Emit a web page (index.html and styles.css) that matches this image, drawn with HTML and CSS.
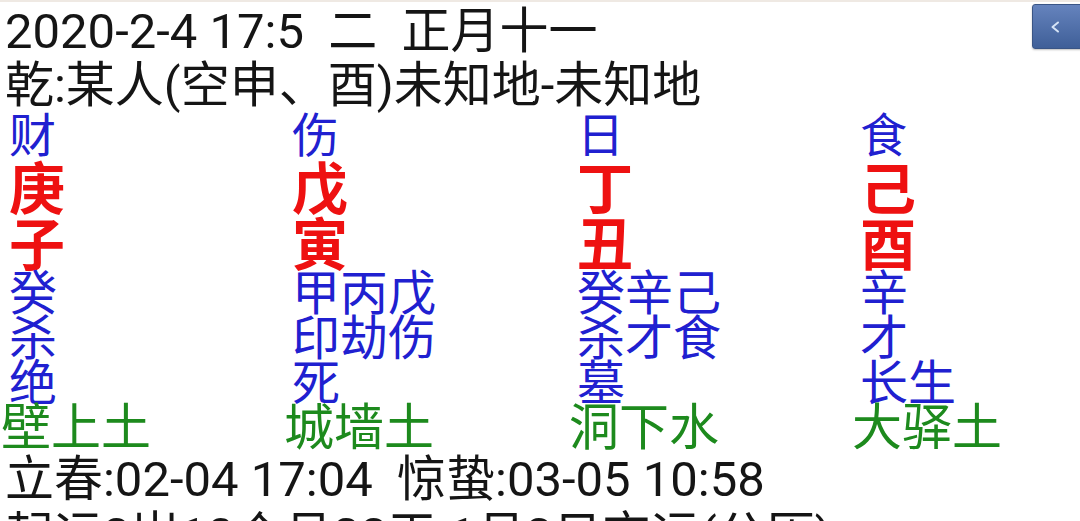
FILE: index.html
```html
<!DOCTYPE html>
<html lang="zh">
<head>
<meta charset="utf-8">
<title>八字排盘</title>
<link rel="stylesheet" href="styles.css">
</head>
<body>
<div class="screen">
  <button class="back" type="button" aria-label="返回"><svg width="10" height="12" viewBox="0 0 10 12"><path d="M8 1.5 L2.5 6 L8 10.5" fill="none" stroke="#d6e4f6" stroke-width="2" stroke-linecap="round" stroke-linejoin="round"/></svg></button>
  <div class="line l1">2020-2-4 17:5  二  正月十一</div>
  <div class="line l2">乾:某人(空申、酉)未知地-未知地</div>
  <div class="pillars">
    <div class="pillar">
      <div class="shen">财</div>
      <div class="gan">庚</div>
      <div class="zhi">子</div>
      <div class="cang">癸</div>
      <div class="cang">杀</div>
      <div class="cang">绝</div>
      <div class="nayin">壁上土</div>
    </div>
    <div class="pillar">
      <div class="shen">伤</div>
      <div class="gan">戊</div>
      <div class="zhi">寅</div>
      <div class="cang">甲丙戊</div>
      <div class="cang">印劫伤</div>
      <div class="cang">死</div>
      <div class="nayin">城墙土</div>
    </div>
    <div class="pillar">
      <div class="shen">日</div>
      <div class="gan">丁</div>
      <div class="zhi">丑</div>
      <div class="cang">癸辛己</div>
      <div class="cang">杀才食</div>
      <div class="cang">墓</div>
      <div class="nayin">洞下水</div>
    </div>
    <div class="pillar">
      <div class="shen">食</div>
      <div class="gan">己</div>
      <div class="zhi">酉</div>
      <div class="cang">辛</div>
      <div class="cang">才</div>
      <div class="cang">长生</div>
      <div class="nayin">大驿土</div>
    </div>
  </div>
  <div class="line l3">立春:02-04 17:04  惊蛰:03-05 10:58</div>
  <div class="line l4">起运3岁10个月23天 1月3日交运(公历)</div>
</div>
</body>
</html>
```

FILE: styles.css
```css
html, body {
  margin: 0;
  padding: 0;
  background: #ffffff;
}
body {
  width: 1080px;
  height: 521px;
  overflow: hidden;
  font-family: Roboto, "Noto Sans CJK SC", sans-serif;
}
.screen {
  position: relative;
  height: 521px;
  padding: 3px 0 0 5px;
  box-sizing: border-box;
  border-top: 2px solid #efe9e3;
  color: #151515;
}
.line {
  font-size: 49px;
  line-height: 54px;
  white-space: pre;
}
.pillars {
  display: grid;
  grid-template-columns: 283px 285px 283px 285px;
  padding-left: 4px;
}
.pillar {
  display: flex;
  flex-direction: column;
  white-space: nowrap;
}
.shen, .cang {
  color: #2020d0;
  font-size: 47px;
  line-height: 46px;
}
.cang {
  font-size: 48px;
  line-height: 45px;
}
.gan, .zhi {
  color: #ee1111;
  font-size: 56px;
  font-weight: 700;
  line-height: 62px;
}
.zhi {
  line-height: 50px;
}
.nayin {
  color: #1d8a1d;
  font-size: 50px;
  line-height: 45px;
  margin-left: -8px;
}
.l3 {
  line-height: 58px;
}
.back {
  position: absolute;
  top: 2px;
  right: -6px;
  width: 54px;
  height: 45px;
  border: 1px solid #3a5585;
  border-radius: 3px;
  background: linear-gradient(#6583bd, #3f5f98);
  padding: 0 8px 0 0;
  display: flex;
  align-items: center;
  justify-content: center;
  box-shadow: 0 1px 2px rgba(0,0,0,0.25);
}
```
